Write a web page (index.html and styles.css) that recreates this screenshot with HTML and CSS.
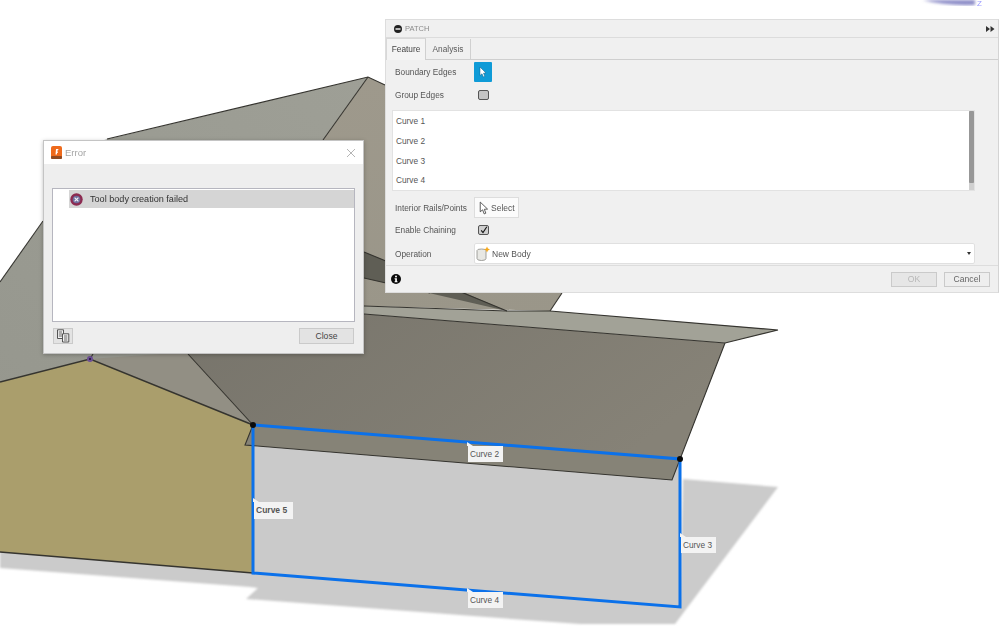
FILE: index.html
```html
<!DOCTYPE html>
<html lang="en">
<head>
<meta charset="UTF-8">
<meta name="viewport" content="width=device-width, initial-scale=1.0">
<title>Patch - Tool body creation failed</title>
<link rel="stylesheet" href="styles.css">
</head>
<body>

<!-- Canvas with the model -->
<svg class="scene" width="999" height="643" viewBox="0 0 999 643">
  <defs>
    <linearGradient id="grayFace" x1="0" y1="1" x2="1" y2="0">
      <stop offset="0" stop-color="#96978e"/>
      <stop offset="1" stop-color="#9e9f96"/>
    </linearGradient>
    <linearGradient id="tanFace" x1="0" y1="0" x2="0" y2="1">
      <stop offset="0" stop-color="#9e998c"/>
      <stop offset="0.7" stop-color="#9a9689"/>
      <stop offset="1" stop-color="#8d897d"/>
    </linearGradient>
    <linearGradient id="darkFace" x1="0" y1="0" x2="1" y2="0.4">
      <stop offset="0" stop-color="#77746b"/>
      <stop offset="1" stop-color="#868277"/>
    </linearGradient>
    <filter id="soft"><feGaussianBlur stdDeviation="0.8"/></filter>
    <filter id="softer"><feGaussianBlur stdDeviation="1.6"/></filter>
  </defs>

  <!-- axis gizmo corner -->
  <path d="M923 0 L975 0 L975 5 Q945 6 923 0 Z" fill="#8d8dc8" filter="url(#softer)"/>

  <!-- shadow on the ground -->
  <polygon points="0,545 0,568 250,587 258,588 246,599 580,624 675,624 778,487 683,479 680,600 253,565" fill="#cbcbcb" filter="url(#soft)"/>

  <!-- upper faces -->
  <polygon points="368,77 100,141 0,282 0,382 90,359 253,425 323,140" fill="url(#grayFace)"/>
  <polygon points="90,359 188,352 253,425" fill="#928f84"/>
  <polygon points="368,77 323,140 188,354 253,425 364,314 364,306 550,311 562,293 560,90 385,85" fill="url(#tanFace)"/>
  <polygon points="364,252 465,293 507,311 364,278" fill="#5f5e55"/>
  <polygon points="364,306 507,311 550,311 778,330 725,343 364,314" fill="#a2a297"/>
  <polygon points="188,354 364,314 725,343 672,480 245,445 253,425" fill="url(#darkFace)"/>

  <!-- flat faces -->
  <polygon points="0,382 90,359 253,425 253,573 0,552" fill="#aa9e6c"/>
  <polygon points="253,446 672,480 680,459 680,607 253,573" fill="#cacaca"/>
  <polygon points="253,425 680,459 672,480 245,445" fill="#868377"/>

  <!-- edges -->
  <g fill="none" stroke="#35342f" stroke-width="1.1">
    <polyline points="0,282 43,221"/>
    <polyline points="107,139 368,77 385,85"/>
    <line x1="368" y1="77" x2="323" y2="140"/>
    <line x1="364" y1="252" x2="507" y2="311"/>
    <line x1="364" y1="278" x2="430" y2="293"/>
    <polyline points="364,306 507,311 550,311 778,330 725,343 364,314"/>
    <line x1="562" y1="293" x2="550" y2="311"/>
    <polyline points="725,343 672,480 245,445 253,425"/>
    <line x1="188" y1="354" x2="253" y2="425"/>
    <line x1="93" y1="354" x2="90" y2="359"/>
    <polyline points="0,382 90,359 253,425" stroke-width="1.5"/>
    <line x1="0" y1="552" x2="253" y2="573" stroke-width="1.5"/>
  </g>

  <!-- selected boundary -->
  <polygon points="253,425 680,459 680,607 253,573" fill="none" stroke="#0b71ea" stroke-width="3"/>
  <circle cx="253" cy="425" r="3" fill="#0b0b0b"/>
  <circle cx="680" cy="459" r="3" fill="#0b0b0b"/>
  <circle cx="90" cy="359" r="3" fill="#6d4f96"/>
  <circle cx="90" cy="359" r="1" fill="#1c1530"/>
</svg>

<span class="axis-z">Z</span>

<!-- Curve labels on the model -->
<div class="tag tag-2">Curve 2</div>
<div class="tag tag-3">Curve 3</div>
<div class="tag tag-4">Curve 4</div>
<div class="tag tag-5">Curve 5</div>

<!-- Error dialog -->
<div class="dialog">
  <div class="dialog-title">
    <svg class="app-icon" width="11" height="13" viewBox="0 0 11 13">
      <rect width="11" height="13" rx="2" fill="#ee6a1c"/>
      <rect y="10" width="11" height="3" rx="1" fill="#8f4a22"/>
      <path d="M4.5 8.5 L5 3 H7.5 L7 4.6 H6.2 L6.1 5.5 H7 L6.7 7 H6 L5.9 8.5 Z" fill="#fff"/>
    </svg>
    <span class="dialog-name">Error</span>
    <svg class="dialog-x" width="10" height="10" viewBox="0 0 10 10">
      <path d="M1 1 L9 9 M9 1 L1 9" stroke="#b5b5b5" stroke-width="1" fill="none"/>
    </svg>
  </div>
  <div class="dialog-body">
    <div class="message-list">
      <div class="message-row">
        <svg class="message-icon" width="13" height="13" viewBox="0 0 13 13">
          <circle cx="6.5" cy="6.5" r="6.2" fill="#8c2a50"/>
          <circle cx="6.5" cy="6.5" r="3.8" fill="#6f6d9c"/>
          <path d="M4.6 4.6 L8.4 8.4 M8.4 4.6 L4.6 8.4" stroke="#f2f2f6" stroke-width="1.2"/>
        </svg>
        <span>Tool body creation failed</span>
      </div>
    </div>
    <div class="dialog-actions">
      <button class="btn btn-copy">
        <svg width="14" height="14" viewBox="0 0 14 14">
          <path d="M1.5 0.8 H7.5 V9.5 H1.5 Z" fill="#f2f2f2" stroke="#444" stroke-width="0.9"/>
          <path d="M2.8 3 H6 M2.8 5 H6 M2.8 7 H6" stroke="#444" stroke-width="0.8"/>
          <path d="M6.5 4.8 H12.8 V13 H6.5 Z" fill="#f2f2f2" stroke="#444" stroke-width="0.9"/>
          <path d="M8 7 H11.3 M8 9 H11.3 M8 11 H11.3" stroke="#444" stroke-width="0.8"/>
        </svg>
      </button>
      <button class="btn btn-close">Close</button>
    </div>
  </div>
</div>

<!-- Patch command panel -->
<div class="panel">
  <div class="panel-head">
    <svg width="8" height="8" viewBox="0 0 8 8">
      <circle cx="4" cy="4" r="4" fill="#222"/>
      <rect x="1.5" y="3.2" width="5" height="1.6" fill="#ddd"/>
    </svg>
    <span class="panel-title">PATCH</span>
    <svg class="panel-more" width="9" height="6" viewBox="0 0 9 6">
      <path d="M0 0 L4 3 L0 6 Z M4.5 0 L8.5 3 L4.5 6 Z" fill="#333"/>
    </svg>
  </div>

  <div class="tabs">
    <div class="tab tab-active">Feature</div>
    <div class="tab">Analysis</div>
  </div>

  <div class="panel-body">
    <div class="row row-first">
      <label>Boundary Edges</label>
      <button class="pick pick-active">
        <svg width="8" height="12" viewBox="0 0 8 12">
          <path d="M1 1 L1 9.5 L3 7.8 L4.4 11 L5.8 10.3 L4.5 7.2 L7 7 Z" fill="#fff" stroke="#0d5f88" stroke-width="0.5"/>
        </svg>
      </button>
    </div>
    <div class="row row-group">
      <label>Group Edges</label>
      <span class="check"></span>
    </div>

    <div class="curve-list">
      <div class="curve">Curve 1</div>
      <div class="curve">Curve 2</div>
      <div class="curve">Curve 3</div>
      <div class="curve">Curve 4</div>
      <div class="scroll"><div class="scroll-thumb"></div></div>
    </div>

    <div class="row row-rails">
      <label>Interior Rails/Points</label>
      <button class="pick pick-select">
        <svg width="10" height="14" viewBox="0 0 9 13">
          <path d="M1 1 L1 10 L3.2 8.2 L4.7 12 L6.2 11.3 L4.8 7.7 L7.8 7.5 Z" fill="#fff" stroke="#444" stroke-width="0.8"/>
        </svg>
        Select
      </button>
    </div>
    <div class="row row-chain">
      <label>Enable Chaining</label>
      <span class="check check-on">
        <svg width="8" height="8" viewBox="0 0 8 8">
          <path d="M1.2 4.4 L3 6.6 L6.8 0.8" fill="none" stroke="#111" stroke-width="1.1"/>
        </svg>
      </span>
    </div>
    <div class="row row-operation">
      <label>Operation</label>
      <div class="select">
        <svg width="15" height="16" viewBox="0 0 15 16">
          <path d="M1 4.5 Q1 3 5.5 3 Q10 3 10 4.5 V12.5 Q10 14.5 5.5 14.5 Q1 14.5 1 12.5 Z" fill="#e8e8e4" stroke="#8a8a86" stroke-width="0.8"/>
          <path d="M11 0.5 L11.9 2.6 L14 3.5 L11.9 4.4 L11 6.5 L10.1 4.4 L8 3.5 L10.1 2.6 Z" fill="#f6a81a"/>
        </svg>
        <span class="select-text">New Body</span>
        <span class="select-arrow"></span>
      </div>
    </div>
  </div>

  <div class="panel-foot">
    <svg width="10" height="10" viewBox="0 0 10 10">
      <circle cx="5" cy="5" r="5" fill="#0a0a0a"/>
      <rect x="4.1" y="1.7" width="1.8" height="1.6" fill="#fff"/>
      <path d="M3.6 4.2 H5.9 V7.3 H6.5 V8.3 H3.6 V7.3 H4.2 V5.2 H3.6 Z" fill="#fff"/>
    </svg>
    <div class="foot-buttons">
      <button class="btn btn-ok">OK</button>
      <button class="btn btn-cancel">Cancel</button>
    </div>
  </div>
</div>

</body>
</html>
```

FILE: styles.css
```css
/* Page */
body {
  margin: 0;
  width: 999px;
  height: 643px;
  overflow: hidden;
  position: relative;
  background-color: #ffffff;
  font-family: "Liberation Sans", Arial, sans-serif;
  font-size: 8.3px;
  color: #555555;
  filter: blur(0.35px); /* the reference is a scaled down capture */
}

button {
  font-family: inherit;
  font-size: inherit;
  padding: 0;
  cursor: pointer;
}

/* Model canvas */
.scene {
  position: absolute;
  left: 0;
  top: 0;
}

.axis-z {
  position: absolute;
  left: 977px;
  top: 0;
  font-size: 8px;
  line-height: 8px;
  color: #9a9aff;
}

/* Curve labels */
.tag {
  position: absolute;
  width: 35px;
  height: 16px;
  line-height: 16px;
  padding-left: 2px;
  box-sizing: border-box;
  background-color: #f3f3f3;
  white-space: nowrap;
}

.tag::before {
  content: "";
  position: absolute;
  left: -1px;
  top: -4px;
  border-left: 6px solid #f3f3f3;
  border-top: 4px solid transparent;
}

.tag-2 { left: 468px; top: 446px; }
.tag-3 { left: 681px; top: 537px; }
.tag-4 { left: 468px; top: 592px; }
.tag-5 { left: 254px; top: 502px; width: 39px; height: 17px; line-height: 17px; font-size: 8.5px; font-weight: bold; }

/* Error dialog */
.dialog {
  position: absolute;
  left: 43px;
  top: 140px;
  width: 321px;
  height: 214px;
  box-sizing: border-box;
  border: 1px solid #c4c4c4;
  background-color: #eeeeee;
  box-shadow: 0 1px 4px rgba(0, 0, 0, 0.25);
  display: flex;
  flex-direction: column;
}

.dialog-title {
  height: 23px;
  background-color: #ffffff;
  display: flex;
  align-items: center;
  padding: 0 7px;
  gap: 3px;
  flex: none;
}

.dialog-name {
  font-size: 9.5px;
  color: #a5a5a5;
}

.dialog-x {
  margin-left: auto;
}

.dialog-body {
  flex: 1;
  padding: 24px 8px 0 8px;
  display: flex;
  flex-direction: column;
}

.message-list {
  height: 134px;
  box-sizing: border-box;
  flex: none;
  background-color: #ffffff;
  border: 1px solid #b6b6bf;
  padding-top: 1px;
}

.message-row {
  margin-left: 16px;
  height: 18px;
  background-color: #d5d5d5;
  display: flex;
  align-items: center;
  gap: 7px;
  padding-left: 1px;
  font-size: 9.1px;
  color: #333333;
}

.dialog-actions {
  display: flex;
  justify-content: space-between;
  margin-top: 6px;
  padding: 0 1px;
}

.btn {
  height: 16px;
  box-sizing: border-box;
  border: 1px solid #cacaca;
  background-color: #e3e3e3;
  color: #555555;
  font-size: 8.6px;
}

.btn-copy {
  width: 20px;
  display: flex;
  align-items: center;
  justify-content: center;
}

.btn-close {
  width: 55px;
  color: #444444;
}

/* Patch panel */
.panel {
  position: absolute;
  left: 385px;
  top: 19px;
  width: 614px;
  height: 274px;
  box-sizing: border-box;
  border: 1px solid #dddddd;
  border-right-color: #d4d4d4;
  background-color: #f0f0f0;
  display: flex;
  flex-direction: column;
}

.panel-head {
  height: 17px;
  flex: none;
  border-bottom: 1px solid #dcdcdc;
  display: flex;
  align-items: center;
  padding: 0 3px 0 8px;
  gap: 3px;
  color: #8a8a8a;
  font-size: 7.5px;
}

.panel-more {
  margin-left: auto;
}

.tabs {
  height: 21px;
  flex: none;
  border-bottom: 1px solid #cfcfcf;
  display: flex;
  box-sizing: content-box;
}

.tab {
  width: 45px;
  line-height: 21px;
  text-align: center;
  box-sizing: border-box;
  border-right: 1px solid #d0d0d0;
  margin-top: 1px;
  color: #5a5a5a;
}

.tab-active {
  width: 40px;
  background-color: #f4f4f4;
  border-left: 1px solid #d8d8d8;
  border-top: 1px solid #d8d8d8;
  margin-top: 0;
  margin-bottom: -1px;
  color: #444444;
  height: 22px;
}

.panel-body {
  padding: 2px 23px 0 6px;
  flex: none;
}

.row {
  display: grid;
  grid-template-columns: 79px 1fr;
  align-items: center;
  padding-left: 3px;
  height: 20px;
}

.row label {
  white-space: nowrap;
}

.row-group {
  margin-top: 3px;
}

.row-rails {
  margin-top: 6px;
  height: 21px;
}

.row-chain {
  margin-top: 2px;
}

.row-operation {
  margin-top: 3px;
  height: 21px;
}

.pick {
  height: 20px;
  border: none;
  display: flex;
  align-items: center;
}

.pick-active {
  width: 18px;
  justify-content: center;
  background-color: #0f9bd7;
  border-radius: 1px;
}

.pick-select {
  width: 45px;
  height: 21px;
  box-sizing: border-box;
  background-color: #fbfbfb;
  border: 1px solid #dddddd;
  gap: 2px;
  padding-left: 4px;
  font-size: 8.5px;
  color: #555555;
}

.check {
  width: 11px;
  height: 10px;
  margin-left: 4px;
  box-sizing: border-box;
  border: 1px solid #555555;
  border-radius: 2px;
  background-color: #c4c4c4;
  display: flex;
  align-items: center;
  justify-content: center;
}

.check-on {
  background-color: #cfcfcf;
}

/* Curve list */
.curve-list {
  position: relative;
  height: 81px;
  box-sizing: border-box;
  margin-top: 5px;
  border: 1px solid #e2e2e2;
  background-color: #ffffff;
  padding-top: 1px;
}

.curve {
  height: 19.75px;
  line-height: 19.75px;
  padding-left: 3px;
}

.scroll {
  position: absolute;
  right: 0;
  top: 0;
  bottom: 0;
  width: 5px;
  background-color: #d0d0d0;
}

.scroll-thumb {
  height: 72px;
  background-color: #979797;
  border-radius: 1px;
}

/* Operation dropdown */
.select {
  height: 21px;
  box-sizing: border-box;
  background-color: #ffffff;
  border: 1px solid #e0e0e0;
  border-radius: 2px;
  display: flex;
  align-items: center;
  padding-left: 1px;
  gap: 1px;
  font-size: 8.5px;
}

.select-arrow {
  margin-left: auto;
  margin-right: 3px;
  border-left: 2.5px solid transparent;
  border-right: 2.5px solid transparent;
  border-top: 3px solid #333333;
}

/* Footer */
.panel-foot {
  margin-top: 1px;
  border-top: 1px solid #dddddd;
  flex: 1;
  display: flex;
  align-items: center;
  padding: 0 8px 0 5px;
}

.foot-buttons {
  margin-left: auto;
  display: flex;
  gap: 7px;
}

.btn-ok,
.btn-cancel {
  width: 46px;
  height: 15px;
  line-height: 12px;
}

.btn-ok {
  color: #b8b8b8;
  background-color: #e6e6e6;
}

.btn-cancel {
  background-color: #eeeeee;
  color: #666666;
}
```
